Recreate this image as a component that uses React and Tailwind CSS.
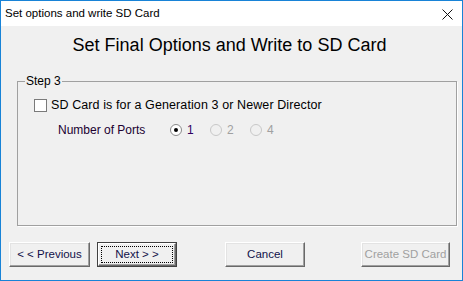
import React from "react";

function Btn({ children, def, disabled, className = "" }) {
  if (def) {
    return (
      <div className={"h-[25px] border border-[#404040] " + className}>
        <div className="h-full border-t border-l border-t-white border-l-white border-b border-r border-b-[#696969] border-r-[#696969] bg-[#f0f0f0] shadow-[inset_-1px_-1px_0_#a0a0a0] p-[2px]">
          <div className="h-full border border-dotted border-black flex items-center justify-center text-[11.5px] text-[#10104a]">
            {children}
          </div>
        </div>
      </div>
    );
  }
  return (
    <div
      className={
        "h-[25px] flex items-center justify-center border-t border-l border-t-white border-l-white border-b border-r border-b-[#696969] border-r-[#696969] bg-[#f0f0f0] shadow-[inset_-1px_-1px_0_#a0a0a0,inset_1px_1px_0_#e3e3e3] text-[11.5px] " +
        (disabled ? "text-[#a0a0a0] " : "text-[#10104a] ") +
        className
      }
    >
      {children}
    </div>
  );
}

function Radio({ checked, disabled }) {
  return (
    <div
      className={
        "w-[12px] h-[12px] rounded-full border flex items-center justify-center " +
        (disabled ? "border-[#c8c8c8] bg-[#f0f0f0]" : "border-[#8a8a8a] bg-white")
      }
    >
      {checked && <div className="w-[4px] h-[4px] rounded-full bg-black" />}
    </div>
  );
}

export default function App() {
  return (
    <div className="w-[463px] h-[281px] border border-[#1883d7] bg-[#f0f0f0] flex flex-col font-['Liberation_Sans',Arial,sans-serif] text-black">
      <div className="h-[25px] bg-white flex items-center justify-between pl-[4px] pr-[9px] shrink-0">
        <span className="text-[11.5px] leading-none">Set options and write SD Card</span>
        <svg width="11" height="11" viewBox="0 0 11 11" className="mt-[1px]">
          <path d="M0.5 0.5 L10.5 10.5 M10.5 0.5 L0.5 10.5" stroke="#111" strokeWidth="1" fill="none" />
        </svg>
      </div>

      <div className="flex-1 flex flex-col">
        <h1 className="mt-[9px] text-[18px] leading-[20px] text-center pr-[4px]">
          Set Final Options and Write to SD Card
        </h1>

        <fieldset className="mt-[19px] ml-[16px] mr-[5px] h-[152px] border border-[#a0a0a0] shadow-[1px_1px_0_white]">
          <legend className="ml-[7px] px-[1px] text-[12px] leading-[14px]">Step 3</legend>
          <div className="pl-[16px] pt-[11px] flex flex-col">
            <div className="flex items-center gap-[4px] h-[13px]">
              <div className="w-[13px] h-[13px] border border-[#7a7a7a] bg-white" />
              <span className="text-[12.5px] tracking-[0.1px] leading-none">SD Card is for a Generation 3 or Newer Director</span>
            </div>
            <div className="flex items-center h-[13px] mt-[11px] text-[12px] leading-none">
              <span className="ml-[24px] w-[112px] text-[#200030]">Number of Ports</span>
              <Radio checked />
              <span className="ml-[5px] w-[23px] text-[#300060]">1</span>
              <Radio disabled />
              <span className="ml-[5px] w-[23px] text-[#a0a0a0]">2</span>
              <Radio disabled />
              <span className="ml-[5px] text-[#a0a0a0]">4</span>
            </div>
          </div>
        </fieldset>

        <div className="flex mt-[16px] pl-[8px]">
          <Btn className="w-[81px]">&lt; &lt; Previous</Btn>
          <Btn def className="w-[80px] ml-[7px]">Next &gt; &gt;</Btn>
          <Btn className="w-[80px] ml-[48px]">Cancel</Btn>
          <Btn disabled className="w-[89px] ml-[56px]">Create SD Card</Btn>
        </div>
      </div>
    </div>
  );
}
